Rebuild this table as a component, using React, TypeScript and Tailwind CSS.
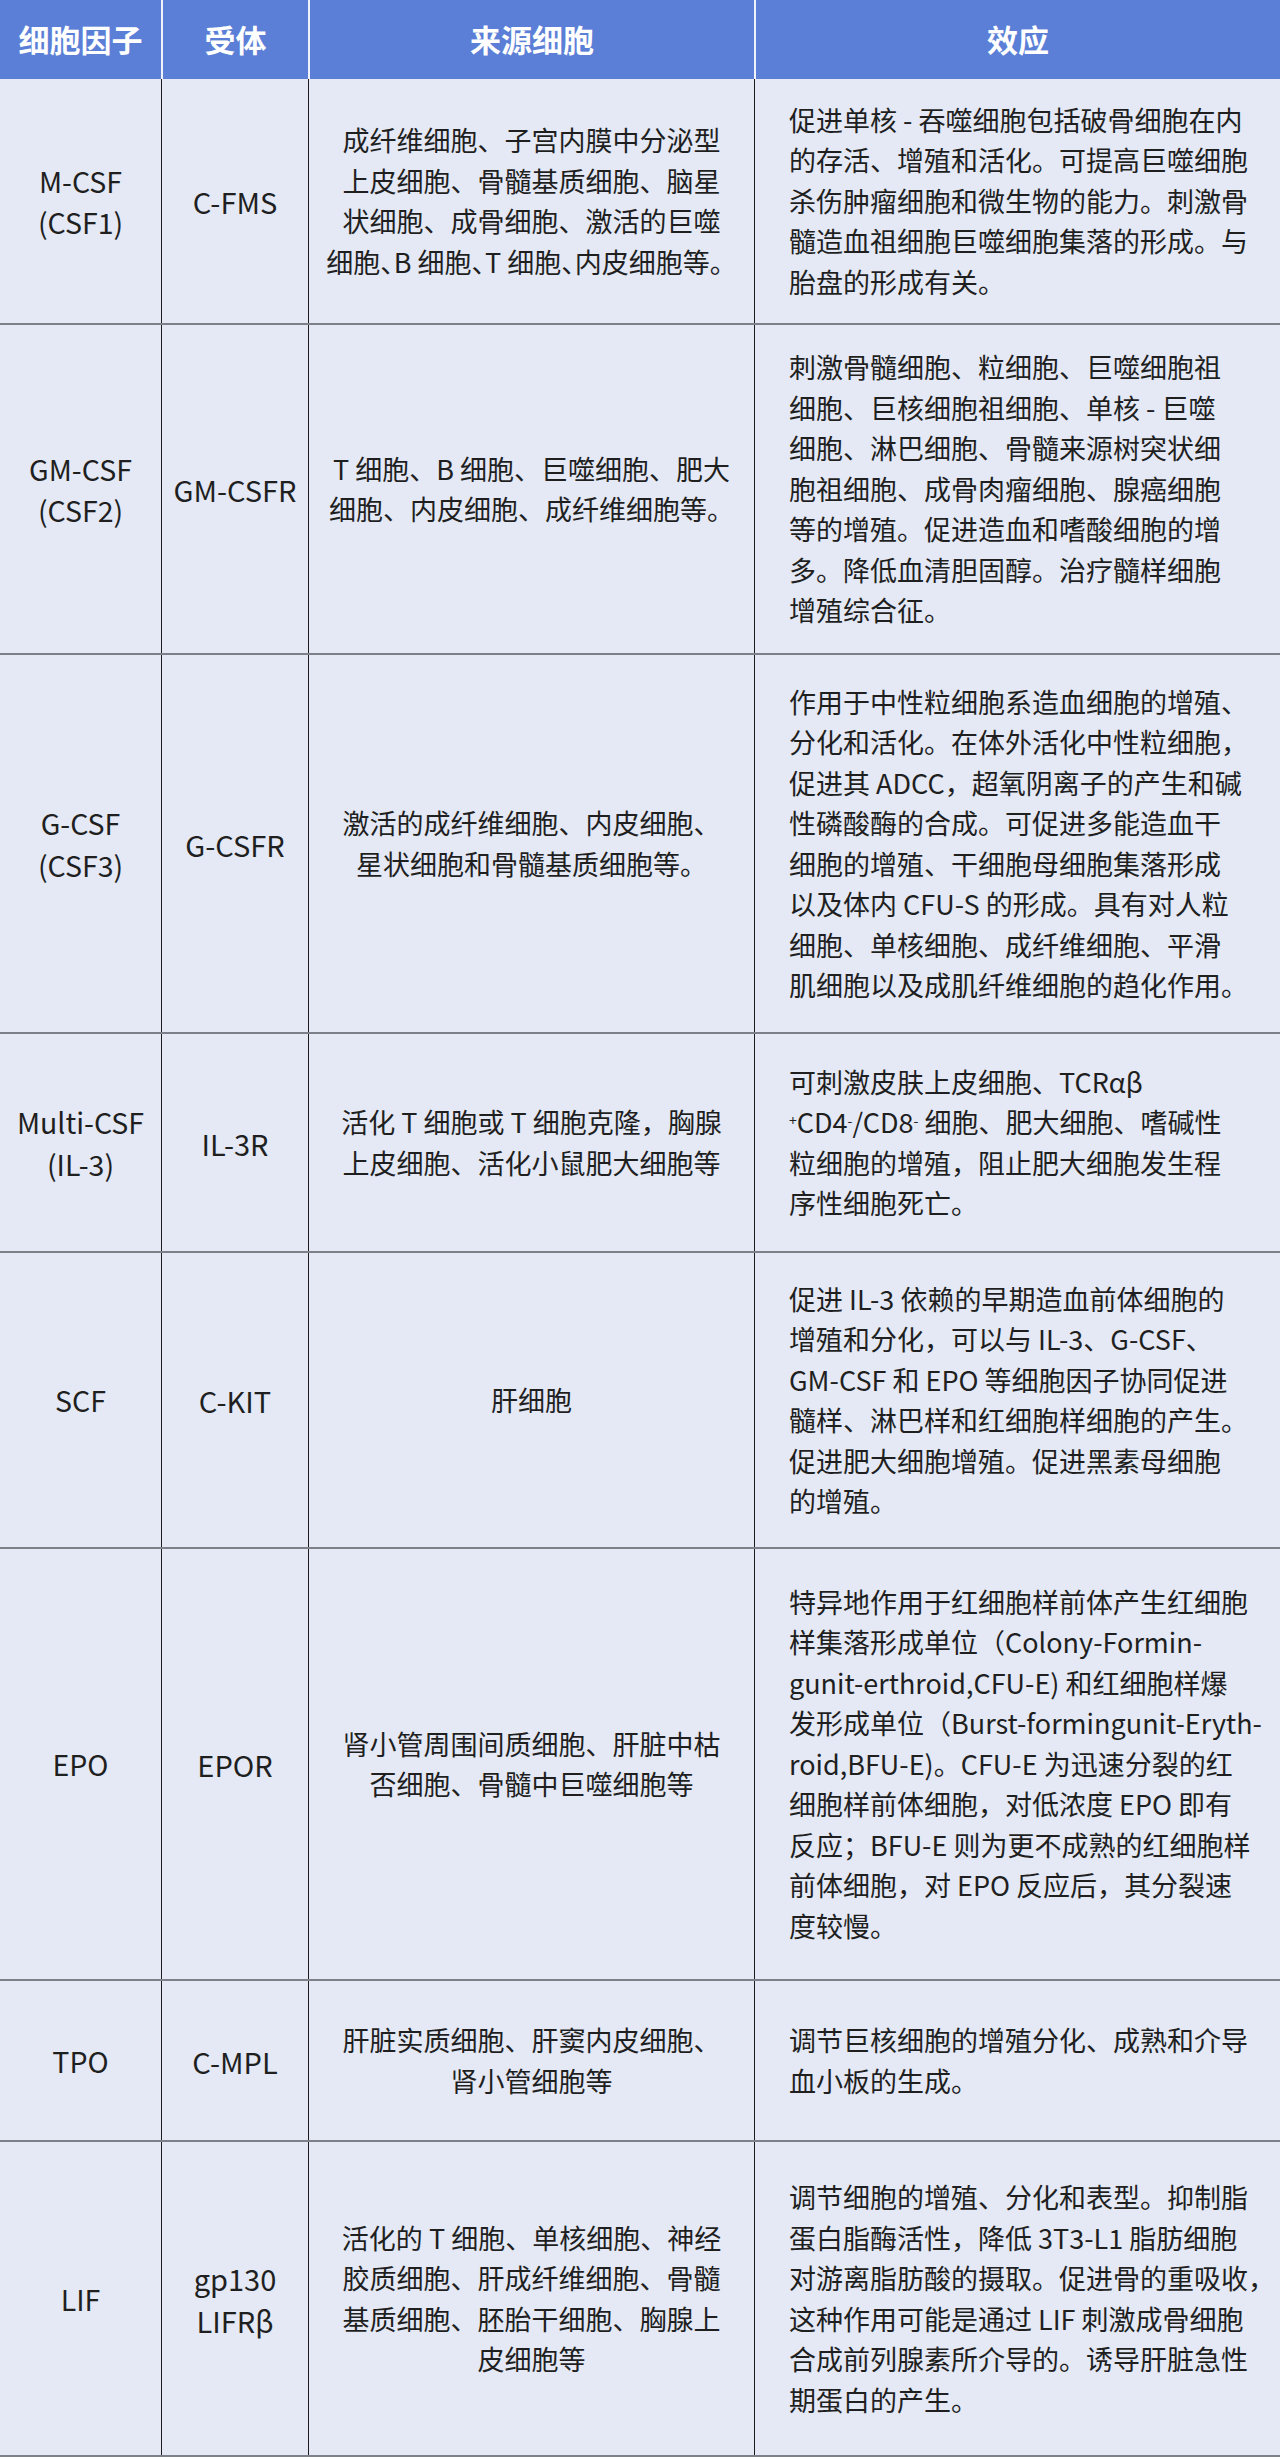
import React from "react";

type Row = {
  h: string;
  factor: string[];
  receptor: string[];
  source: React.ReactNode[];
  effect: React.ReactNode[];
};

// 顿号在参考图里被压成半角
const Dun = () => <span className="[font-feature-settings:'halt']">、</span>;

const rows: Row[] = [
  {
    h: "h-[246px]",
    factor: ["M-CSF", "(CSF1)"],
    receptor: ["C-FMS"],
    source: [
      "成纤维细胞、子宫内膜中分泌型",
      "上皮细胞、骨髓基质细胞、脑星",
      "状细胞、成骨细胞、激活的巨噬",
      <>
        细胞<Dun />B 细胞<Dun />T 细胞<Dun />内皮细胞等。
      </>,
    ],
    effect: [
      "促进单核 - 吞噬细胞包括破骨细胞在内",
      "的存活、增殖和活化。可提高巨噬细胞",
      "杀伤肿瘤细胞和微生物的能力。刺激骨",
      "髓造血祖细胞巨噬细胞集落的形成。与",
      "胎盘的形成有关。",
    ],
  },
  {
    h: "h-[330px]",
    factor: ["GM-CSF", "(CSF2)"],
    receptor: ["GM-CSFR"],
    source: ["T 细胞、B 细胞、巨噬细胞、肥大", "细胞、内皮细胞、成纤维细胞等。"],
    effect: [
      "刺激骨髓细胞、粒细胞、巨噬细胞祖",
      "细胞、巨核细胞祖细胞、单核 - 巨噬",
      "细胞、淋巴细胞、骨髓来源树突状细",
      "胞祖细胞、成骨肉瘤细胞、腺癌细胞",
      "等的增殖。促进造血和嗜酸细胞的增",
      "多。降低血清胆固醇。治疗髓样细胞",
      "增殖综合征。",
    ],
  },
  {
    h: "h-[379px]",
    factor: ["G-CSF", "(CSF3)"],
    receptor: ["G-CSFR"],
    source: ["激活的成纤维细胞、内皮细胞、", "星状细胞和骨髓基质细胞等。"],
    effect: [
      "作用于中性粒细胞系造血细胞的增殖、",
      "分化和活化。在体外活化中性粒细胞，",
      "促进其 ADCC，超氧阴离子的产生和碱",
      "性磷酸酶的合成。可促进多能造血干",
      "细胞的增殖、干细胞母细胞集落形成",
      "以及体内 CFU-S 的形成。具有对人粒",
      "细胞、单核细胞、成纤维细胞、平滑",
      "肌细胞以及成肌纤维细胞的趋化作用。",
    ],
  },
  {
    h: "h-[219px]",
    factor: ["Multi-CSF", "(IL-3)"],
    receptor: ["IL-3R"],
    source: ["活化 T 细胞或 T 细胞克隆，胸腺", "上皮细胞、活化小鼠肥大细胞等"],
    effect: [
      "可刺激皮肤上皮细胞、TCRαβ",
      <>
        <sup className="text-[14px]">+</sup>CD4<sup className="text-[14px]">-</sup>/CD8
        <sup className="text-[14px]">-</sup> 细胞、肥大细胞、嗜碱性
      </>,
      "粒细胞的增殖，阻止肥大细胞发生程",
      "序性细胞死亡。",
    ],
  },
  {
    h: "h-[296px]",
    factor: ["SCF"],
    receptor: ["C-KIT"],
    source: ["肝细胞"],
    effect: [
      "促进 IL-3 依赖的早期造血前体细胞的",
      "增殖和分化，可以与 IL-3、G-CSF、",
      "GM-CSF 和 EPO 等细胞因子协同促进",
      "髓样、淋巴样和红细胞样细胞的产生。",
      "促进肥大细胞增殖。促进黑素母细胞",
      "的增殖。",
    ],
  },
  {
    h: "h-[432px]",
    factor: ["EPO"],
    receptor: ["EPOR"],
    source: ["肾小管周围间质细胞、肝脏中枯", "否细胞、骨髓中巨噬细胞等"],
    effect: [
      "特异地作用于红细胞样前体产生红细胞",
      "样集落形成单位（Colony-Formin-",
      "gunit-erthroid,CFU-E) 和红细胞样爆",
      "发形成单位（Burst-formingunit-Eryth-",
      "roid,BFU-E)。CFU-E 为迅速分裂的红",
      "细胞样前体细胞，对低浓度 EPO 即有",
      "反应；BFU-E 则为更不成熟的红细胞样",
      "前体细胞，对 EPO 反应后，其分裂速",
      "度较慢。",
    ],
  },
  {
    h: "h-[161px]",
    factor: ["TPO"],
    receptor: ["C-MPL"],
    source: ["肝脏实质细胞、肝窦内皮细胞、", "肾小管细胞等"],
    effect: ["调节巨核细胞的增殖分化、成熟和介导", "血小板的生成。"],
  },
  {
    h: "h-[315px]",
    factor: ["LIF"],
    receptor: ["gp130", "LIFRβ"],
    source: ["活化的 T 细胞、单核细胞、神经", "胶质细胞、肝成纤维细胞、骨髓", "基质细胞、胚胎干细胞、胸腺上", "皮细胞等"],
    effect: [
      "调节细胞的增殖、分化和表型。抑制脂",
      "蛋白脂酶活性，降低 3T3-L1 脂肪细胞",
      "对游离脂肪酸的摄取。促进骨的重吸收，",
      "这种作用可能是通过 LIF 刺激成骨细胞",
      "合成前列腺素所介导的。诱导肝脏急性",
      "期蛋白的产生。",
    ],
  },
];

const cols = "grid grid-cols-[161px_147px_446px_526px]";

function Lines({ items }: { items: React.ReactNode[] }) {
  return (
    <>
      {items.map((t, i) => (
        <div key={i} className="whitespace-nowrap">
          {t}
        </div>
      ))}
    </>
  );
}

export default function App() {
  return (
    <main
      className="w-[1280px] bg-[#e4e9f5] text-[#1f1f1f]"
      style={{ fontFamily: '"Noto Sans CJK SC", "Noto Sans", sans-serif' }}
    >
      <div className={`${cols} h-[79px] bg-[#5b7fd7] text-[31px] font-bold text-white`}>
        <div className="flex items-center justify-center">细胞因子</div>
        <div className="flex items-center justify-center border-l-2 border-white/90">受体</div>
        <div className="flex items-center justify-center border-l-2 border-white/90">来源细胞</div>
        <div className="flex items-center justify-center border-l-2 border-white/90">效应</div>
      </div>

      {rows.map((r, i) => (
        <div key={i} className={`${cols} ${r.h} border-b-2 border-[#7c8089] text-[27px]`}>
          <div className="flex flex-col items-center justify-center text-center text-[28.5px] leading-[41.5px]">
            <Lines items={r.factor} />
          </div>
          <div className="flex flex-col items-center justify-center border-l-[1.5px] border-[#1c1c1c] text-center text-[29px] leading-[42px]">
            <Lines items={r.receptor} />
          </div>
          <div className="flex flex-col items-center justify-center border-l-[1.5px] border-[#1c1c1c] text-center leading-[40.5px]">
            <Lines items={r.source} />
          </div>
          <div className="flex flex-col justify-center border-l-[1.5px] border-[#1c1c1c] pl-[34px] leading-[40.5px]">
            <Lines items={r.effect} />
          </div>
        </div>
      ))}
    </main>
  );
}
